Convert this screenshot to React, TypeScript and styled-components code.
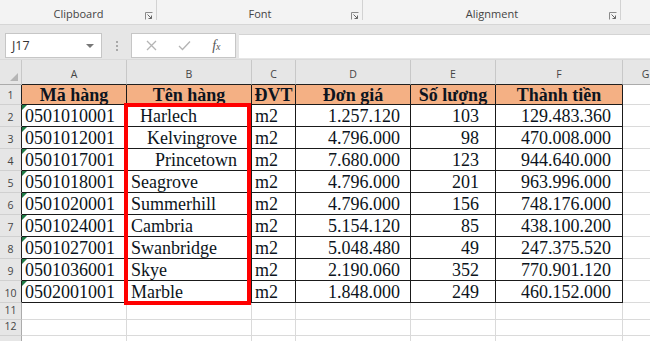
import React from 'react';
import styled, { createGlobalStyle } from 'styled-components';

const GlobalStyle = createGlobalStyle`
  html, body {
    margin: 0;
    padding: 0;
    background: #ffffff;
    overflow: hidden;
  }
  * {
    box-sizing: border-box;
  }
`;

const Page = styled.div`
  width: 650px;
  height: 341px;
  overflow: hidden;
  font-family: 'Open Sans', 'Noto Sans', sans-serif;
`;

const Ribbon = styled.div`
  display: flex;
  height: 25px;
  background: #f3f3f3;
  border-bottom: 1px solid #d6d6d6;
`;

const Group = styled.div<{ $w: number }>`
  position: relative;
  width: ${(p) => p.$w}px;
  flex: none;
  display: flex;
  align-items: flex-end;
  justify-content: center;
  padding-bottom: 3px;
  font-size: 11px;
  color: #444444;
  &::after {
    content: '';
    position: absolute;
    right: 0;
    top: 0;
    height: 20px;
    border-right: 1px solid #d2d2d2;
  }
`;

const Launcher = styled.svg`
  position: absolute;
  right: 4px;
  bottom: 4px;
`;

const FormulaBar = styled.div`
  display: flex;
  align-items: flex-start;
  height: 35px;
  padding-top: 8px;
  background: #e6e6e6;
  border-bottom: 1px solid #dadada;
`;

const NameBox = styled.div`
  width: 97px;
  height: 25px;
  margin-left: 5px;
  background: #ffffff;
  border: 1px solid #c6c6c6;
  display: flex;
  align-items: center;
  justify-content: space-between;
  padding: 0 7px 0 6px;
  font-size: 12.5px;
  color: #333333;
`;

const Caret = styled.span`
  width: 0;
  height: 0;
  border-left: 4px solid transparent;
  border-right: 4px solid transparent;
  border-top: 4px solid #777777;
`;

const Dots = styled.div`
  width: 29px;
  height: 25px;
  display: flex;
  flex-direction: column;
  align-items: center;
  justify-content: center;
  gap: 2px;
  span {
    width: 2px;
    height: 2px;
    background: #a8a8a8;
  }
`;

const ButtonBox = styled.div`
  width: 105px;
  height: 25px;
  background: #ffffff;
  border: 1px solid #c6c6c6;
  display: flex;
  align-items: center;
  justify-content: space-around;
  padding: 0 4px;
`;

const Fx = styled.span`
  font-family: 'Liberation Serif', serif;
  font-style: italic;
  font-size: 14px;
  color: #555555;
  sub {
    font-size: 10px;
    vertical-align: 0;
  }
`;

const FormulaInput = styled.div`
  flex: 1;
  height: 24px;
  margin-top: 1px;
  margin-left: 3px;
  background: #ffffff;
  border-top: 1px solid #d4d4d4;
`;

const Sheet = styled.div`
  position: relative;
  display: grid;
  grid-template-columns: 22px 105px 125px 44px 115px 85px 127px 46px;
  grid-template-rows: 25px 20px repeat(9, 22px) 17px 16px 16px;
`;

const Corner = styled.div`
  position: relative;
  background: #e6e6e6;
  border-right: 1px solid #c8c8c8;
  border-bottom: 1px solid #ababab;
  &::after {
    content: '';
    position: absolute;
    right: 3px;
    bottom: 3px;
    border-left: 8px solid transparent;
    border-bottom: 8px solid #b5b5b5;
  }
`;

const ColHead = styled.div<{ $dark?: boolean }>`
  background: #e6e6e6;
  border-right: 1px solid #c8c8c8;
  border-bottom: 1px solid ${(p) => (p.$dark ? '#202020' : '#ababab')};
  display: flex;
  align-items: center;
  justify-content: center;
  padding-top: 4px;
  font-size: 10.5px;
  color: #444444;
`;

const RowHead = styled.div<{ $dark?: boolean }>`
  background: #e6e6e6;
  border-right: 1px solid ${(p) => (p.$dark ? '#202020' : '#ababab')};
  border-bottom: 1px solid #d0d0d0;
  display: flex;
  align-items: flex-end;
  justify-content: center;
  padding-bottom: 2px;
  font-size: 10.5px;
  color: #444444;
`;

const Cell = styled.div<{
  $align?: 'left' | 'center' | 'right';
  $pad?: number;
  $boxed?: boolean;
  $head?: boolean;
  $flag?: boolean;
}>`
  position: relative;
  background: ${(p) => (p.$head ? '#f4b084' : '#ffffff')};
  border-right: 1px solid ${(p) => (p.$boxed ? '#1a1a1a' : '#dadada')};
  border-bottom: 1px solid ${(p) => (p.$boxed ? '#1a1a1a' : '#dadada')};
  font-family: 'Liberation Serif', 'Times New Roman', serif;
  font-size: 18px;
  font-weight: ${(p) => (p.$head ? 700 : 400)};
  color: #0c1420;
  line-height: 20px;
  white-space: pre;
  overflow: visible;
  display: flex;
  align-items: center;
  justify-content: ${(p) =>
    p.$align === 'right' ? 'flex-end' : p.$align === 'center' ? 'center' : 'flex-start'};
  padding-top: 1px;
  padding-left: ${(p) => (p.$align === 'left' ? p.$pad ?? 3 : 0)}px;
  padding-right: ${(p) => (p.$align === 'right' ? p.$pad ?? 3 : 0)}px;
  &::before {
    content: '';
    display: ${(p) => (p.$flag ? 'block' : 'none')};
    position: absolute;
    left: 0;
    top: 0;
    border-top: 5px solid #1e7b45;
    border-right: 5px solid transparent;
  }
`;

const Highlight = styled.div`
  position: absolute;
  left: 124px;
  top: 43px;
  width: 127px;
  height: 202px;
  border: 4px solid #ff0000;
  pointer-events: none;
`;

type Row = {
  code: string;
  name: string;
  indent: number;
  unit: string;
  price: string;
  qty: string;
  total: string;
};

const rows: Row[] = [
  { code: '0501010001', name: 'Harlech', indent: 13, unit: 'm2', price: '1.257.120', qty: '103', total: '129.483.360' },
  { code: '0501012001', name: 'Kelvingrove', indent: 20, unit: 'm2', price: '4.796.000', qty: '98', total: '470.008.000' },
  { code: '0501017001', name: 'Princetown', indent: 28, unit: 'm2', price: '7.680.000', qty: '123', total: '944.640.000' },
  { code: '0501018001', name: 'Seagrove', indent: 4, unit: 'm2', price: '4.796.000', qty: '201', total: '963.996.000' },
  { code: '0501020001', name: 'Summerhill', indent: 4, unit: 'm2', price: '4.796.000', qty: '156', total: '748.176.000' },
  { code: '0501024001', name: 'Cambria', indent: 4, unit: 'm2', price: '5.154.120', qty: '85', total: '438.100.200' },
  { code: '0501027001', name: 'Swanbridge', indent: 4, unit: 'm2', price: '5.048.480', qty: '49', total: '247.375.520' },
  { code: '0501036001', name: 'Skye', indent: 4, unit: 'm2', price: '2.190.060', qty: '352', total: '770.901.120' },
  { code: '0502001001', name: 'Marble', indent: 4, unit: 'm2', price: '1.848.000', qty: '249', total: '460.152.000' },
];

const letters = ['A', 'B', 'C', 'D', 'E', 'F', 'G'];
const headers = ['Mã hàng', 'Tên hàng', 'ĐVT', 'Đơn giá', 'Số lượng', 'Thành tiền'];

const LauncherIcon = () => (
  <Launcher width="8" height="8" viewBox="0 0 8 8">
    <path d="M0.5 7.5V0.5H7.5" fill="none" stroke="#8a8a8a" strokeWidth="1" />
    <path d="M2.5 2.5L6.5 6.5M3.5 6.5H6.5V3.5" fill="none" stroke="#666" strokeWidth="1" />
  </Launcher>
);

const App = () => {
  return (
    <Page>
      <GlobalStyle />
      <Ribbon>
        <Group $w={157}>
          Clipboard
          <LauncherIcon />
        </Group>
        <Group $w={206}>
          Font
          <LauncherIcon />
        </Group>
        <Group $w={258}>
          Alignment
          <LauncherIcon />
        </Group>
      </Ribbon>
      <FormulaBar>
        <NameBox>
          J17
          <Caret />
        </NameBox>
        <Dots>
          <span />
          <span />
          <span />
        </Dots>
        <ButtonBox>
          <svg width="11" height="11" viewBox="0 0 11 11">
            <path d="M1 1L10 10M10 1L1 10" stroke="#b4b4b4" strokeWidth="1.3" />
          </svg>
          <svg width="13" height="11" viewBox="0 0 13 11">
            <path d="M1 6L4.5 9.5L12 1.5" fill="none" stroke="#b4b4b4" strokeWidth="1.3" />
          </svg>
          <Fx>
            f<sub>x</sub>
          </Fx>
        </ButtonBox>
        <FormulaInput />
      </FormulaBar>
      <Sheet>
        <Corner />
        {letters.map((l, i) => (
          <ColHead key={l} $dark={i < 6}>
            {l}
          </ColHead>
        ))}

        <RowHead $dark>1</RowHead>
        {headers.map((h) => (
          <Cell key={h} $head $boxed $align="center">
            {h}
          </Cell>
        ))}
        <Cell />

        {rows.map((r, i) => (
          <React.Fragment key={r.code}>
            <RowHead $dark>{i + 2}</RowHead>
            <Cell $boxed $flag $align="left">
              {r.code}
            </Cell>
            <Cell $boxed $align="left" $pad={r.indent}>
              {r.name}
            </Cell>
            <Cell $boxed $align="left">
              {r.unit}
            </Cell>
            <Cell $boxed $align="right" $pad={10}>
              {r.price}
            </Cell>
            <Cell $boxed $align="right" $pad={16}>
              {r.qty}
            </Cell>
            <Cell $boxed $align="right" $pad={11}>
              {r.total}
            </Cell>
            <Cell />
          </React.Fragment>
        ))}

        {/* rows 11 and 12 are empty; row 13 only peeks in at the bottom edge */}
        {[11, 12, 0].map((n) => (
          <React.Fragment key={n}>
            <RowHead>{n > 0 ? n : ''}</RowHead>
            {letters.map((l) => (
              <Cell key={l} />
            ))}
          </React.Fragment>
        ))}
        <Highlight />
      </Sheet>
    </Page>
  );
};

export default App;
